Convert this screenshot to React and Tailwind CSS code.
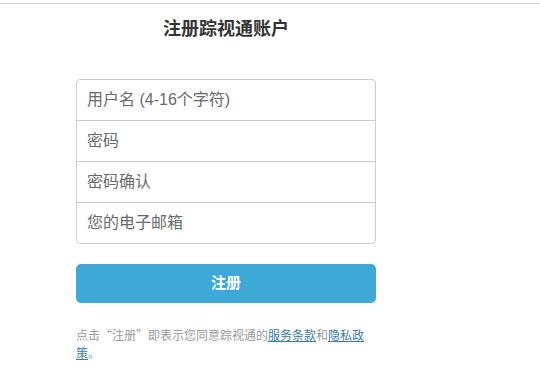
export default function App() {
  const cjk = 'font-["Liberation_Sans","Noto_Sans_CJK_SC",sans-serif]';
  return (
    <div className={`w-[540px] h-[388px] bg-white pt-[3px] ${cjk}`}>
      <div className="border-t border-[#d4d4d4] w-full">
        <div className="ml-[76px] w-[300px]">
          <h1 className="text-center text-[18px] font-bold text-[#333] leading-[24px] mt-[13px]">注册踪视通账户</h1>
          <div className="mt-[38px] border border-[#ccc] rounded-[4px] flex flex-col">
            {["用户名 (4-16个字符)", "密码", "密码确认", "您的电子邮箱"].map((t, i) => (
              <div
                key={i}
                className={`h-[40px] box-content flex items-center pl-[10px] text-[16px] text-[#6a6a6a] ${i > 0 ? "border-t border-[#ccc]" : ""}`}
              >
                {t}
              </div>
            ))}
          </div>
          <button className="mt-[20px] w-full h-[39px] rounded-[5px] bg-[#3ea9d6] text-white font-bold text-[15px]">注册</button>
          <p className='mt-[23px] w-[292px] text-[12px] leading-[18px] text-[#999] font-["Noto_Sans_CJK_SC",sans-serif]'>
            点击“注册”即表示您同意踪视通的<a className="text-[#3a7ca8] underline">服务条款</a>和<a className="text-[#3a7ca8] underline">隐私政策</a>。
          </p>
        </div>
      </div>
    </div>
  );
}
